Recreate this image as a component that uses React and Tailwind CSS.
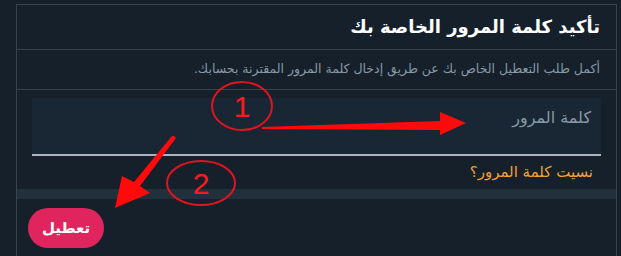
import React from "react";

function Annotations() {
  return (
    <svg
      className="absolute inset-0 pointer-events-none"
      width="621"
      height="256"
      viewBox="0 0 621 256"
    >
      {/* circle 1 */}
      <ellipse cx="242" cy="106" rx="30" ry="24" fill="none" stroke="#e0141e" strokeWidth="2" />
      <text x="242" y="117" textAnchor="middle" fill="#ff1a1a" fontSize="30" fontFamily="Liberation Sans, sans-serif">1</text>
      {/* arrow 1 */}
      <polygon points="262,127 440,121 440,112 466,123 440,135 440,130 262,129" fill="#ff0a0a" />
      {/* circle 2 */}
      <ellipse cx="201" cy="183" rx="34" ry="22" fill="none" stroke="#e0141e" strokeWidth="2" />
      <text x="201" y="194" textAnchor="middle" fill="#ff1a1a" fontSize="30" fontFamily="Liberation Sans, sans-serif">2</text>
      {/* arrow 2 */}
      <polygon points="174,136 176,138 140,186 150,193 115,208 122,176 134,182 172,136" fill="#ff0a0a" />
    </svg>
  );
}

export default function App() {
  return (
    <div
      className="relative w-[621px] h-[256px] overflow-hidden bg-[#16202a]"
      style={{ fontFamily: '"DejaVu Sans", "Noto Sans", sans-serif' }}
    >
      <div dir="rtl" className="ml-[16px] mr-[4px] mt-[4px] h-[252px] border-t border-l border-r border-[#38444d] flex flex-col">
        <div className="h-[45px] flex items-center px-[16px] border-b border-[#38444d]">
          <h1 className="text-[18px] font-bold text-white leading-none">تأكيد كلمة المرور الخاصة بك</h1>
        </div>
        <div className="h-[40px] flex items-center px-[16px] border-b border-[#38444d]">
          <p className="text-[12.5px] text-[#8899a6]">أكمل طلب التعطيل الخاص بك عن طريق إدخال كلمة المرور المقترنة بحسابك.</p>
        </div>
        <div className="px-[15px] pt-[8px]">
          <div className="h-[58px] bg-[#192734] border-b-2 border-[#a9b4be] flex items-start pt-[8px] px-[10px]">
            <span className="text-[16px] text-[#8899a6]">كلمة المرور</span>
          </div>
          <div className="h-[33px] flex items-center pr-[8px]">
            <span className="text-[15px] text-[#f0a22e]">نسيت كلمة المرور؟</span>
          </div>
        </div>
        <div className="h-[10px] bg-[#22303c]"></div>
        <div className="flex justify-end pl-[11px] pt-[9px]">
          <button className="h-[40px] w-[76px] rounded-full bg-[#e0245e] text-white text-[15px] font-bold flex items-center justify-center">
            تعطيل
          </button>
        </div>
      </div>
      <Annotations />
    </div>
  );
}
